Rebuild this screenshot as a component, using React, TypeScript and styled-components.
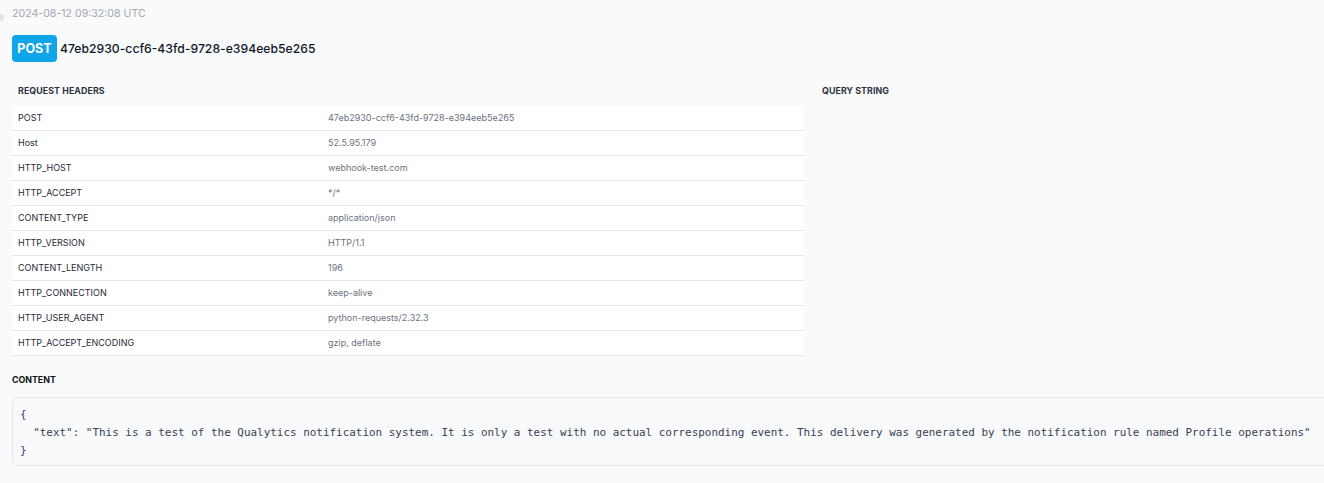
import React from "react";
import styled, { createGlobalStyle } from "styled-components";

const Global = createGlobalStyle`
  html, body { margin: 0; padding: 0; background: #f9fafb; overflow: hidden; }
  body { font-family: Inter, "Noto Sans", sans-serif; color: #111827; }
`;

const Page = styled.div`
  position: relative;
  padding: 6px 12px 0 12px;
  width: 1400px;
  box-sizing: border-box;
`;

const Dot = styled.span`
  position: absolute;
  left: -3px;
  top: 14px;
  width: 7px;
  height: 7px;
  border-radius: 50%;
  background: #e2e4e8;
`;

const Timestamp = styled.div`
  font-size: 10.6px;
  line-height: 16px;
  color: #a3a7ae;
`;

const TitleRow = styled.div`
  display: flex;
  align-items: center;
  gap: 3px;
  margin-top: 13px;
`;

const Badge = styled.span`
  display: inline-flex;
  align-items: center;
  justify-content: center;
  width: 45px;
  height: 27px;
  border-radius: 4px;
  background: #0ea5e9;
  color: #fff;
  font-weight: 700;
  font-size: 12.5px;
`;

const RequestId = styled.span`
  font-size: 12.2px;
  font-weight: 500;
  color: #111827;
`;

const Columns = styled.div`
  display: grid;
  grid-template-columns: 792px 1fr;
  column-gap: 12px;
  margin-top: 20px;
  width: 1300px;
`;

const SectionTitle = styled.div`
  font-size: 8.8px;
  font-weight: 700;
  letter-spacing: 0.1px;
  text-transform: uppercase;
  color: #2d3142;
  padding: 0 6px;
  height: 24px;
  line-height: 18px;
`;

const Table = styled.div`
  display: flex;
  flex-direction: column;
`;

const Row = styled.div`
  display: grid;
  grid-template-columns: 310px 1fr;
  height: 25px;
  align-items: center;
  background: #fff;
  border-bottom: 1px solid #e5e7eb;
  box-sizing: border-box;
  font-size: 9px;
  padding-bottom: 1px;
`;

const Key = styled.span`
  padding-left: 6px;
  color: #1f2937;
`;

const Value = styled.span`
  padding-left: 6px;
  color: #6b7280;
`;

const ContentTitle = styled.div`
  font-size: 8.8px;
  font-weight: 700;
  text-transform: uppercase;
  color: #111;
  margin-top: 17px;
  height: 24px;
  line-height: 14px;
`;

const CodeBox = styled.pre`
  margin: 0;
  border: 1px solid #e5e7eb;
  border-radius: 6px;
  background: #f8f9fb;
  padding: 8px 7px 6px 7px;
  font-family: "DejaVu Sans Mono", monospace;
  font-size: 10.95px;
  line-height: 17.8px;
  color: #374151;
  width: 1340px;
`;

const Punct = styled.span`
  color: #4b2d83;
`;

const headers: [string, string][] = [
  ["POST", "47eb2930-ccf6-43fd-9728-e394eeb5e265"],
  ["Host", "52.5.95.179"],
  ["HTTP_HOST", "webhook-test.com"],
  ["HTTP_ACCEPT", "*/*"],
  ["CONTENT_TYPE", "application/json"],
  ["HTTP_VERSION", "HTTP/1.1"],
  ["CONTENT_LENGTH", "196"],
  ["HTTP_CONNECTION", "keep-alive"],
  ["HTTP_USER_AGENT", "python-requests/2.32.3"],
  ["HTTP_ACCEPT_ENCODING", "gzip, deflate"],
];

export default function App() {
  return (
    <>
      <Global />
      <Page>
        <Dot />
        <Timestamp>2024-08-12 09:32:08 UTC</Timestamp>
        <TitleRow>
          <Badge>POST</Badge>
          <RequestId>47eb2930-ccf6-43fd-9728-e394eeb5e265</RequestId>
        </TitleRow>
        <Columns>
          <div>
            <SectionTitle>Request Headers</SectionTitle>
            <Table>
              {headers.map(([k, v]) => (
                <Row key={k}>
                  <Key>{k}</Key>
                  <Value>{v}</Value>
                </Row>
              ))}
            </Table>
          </div>
          <div>
            <SectionTitle>Query String</SectionTitle>
          </div>
        </Columns>
        <ContentTitle>Content</ContentTitle>
        <CodeBox>
          <Punct>{"{"}</Punct>
          {"\n  \"text\": \"This is a test of the Qualytics notification system. It is only a test with no actual corresponding event. This delivery was generated by the notification rule named Profile operations\"\n"}
          <Punct>{"}"}</Punct>
        </CodeBox>
      </Page>
    </>
  );
}
